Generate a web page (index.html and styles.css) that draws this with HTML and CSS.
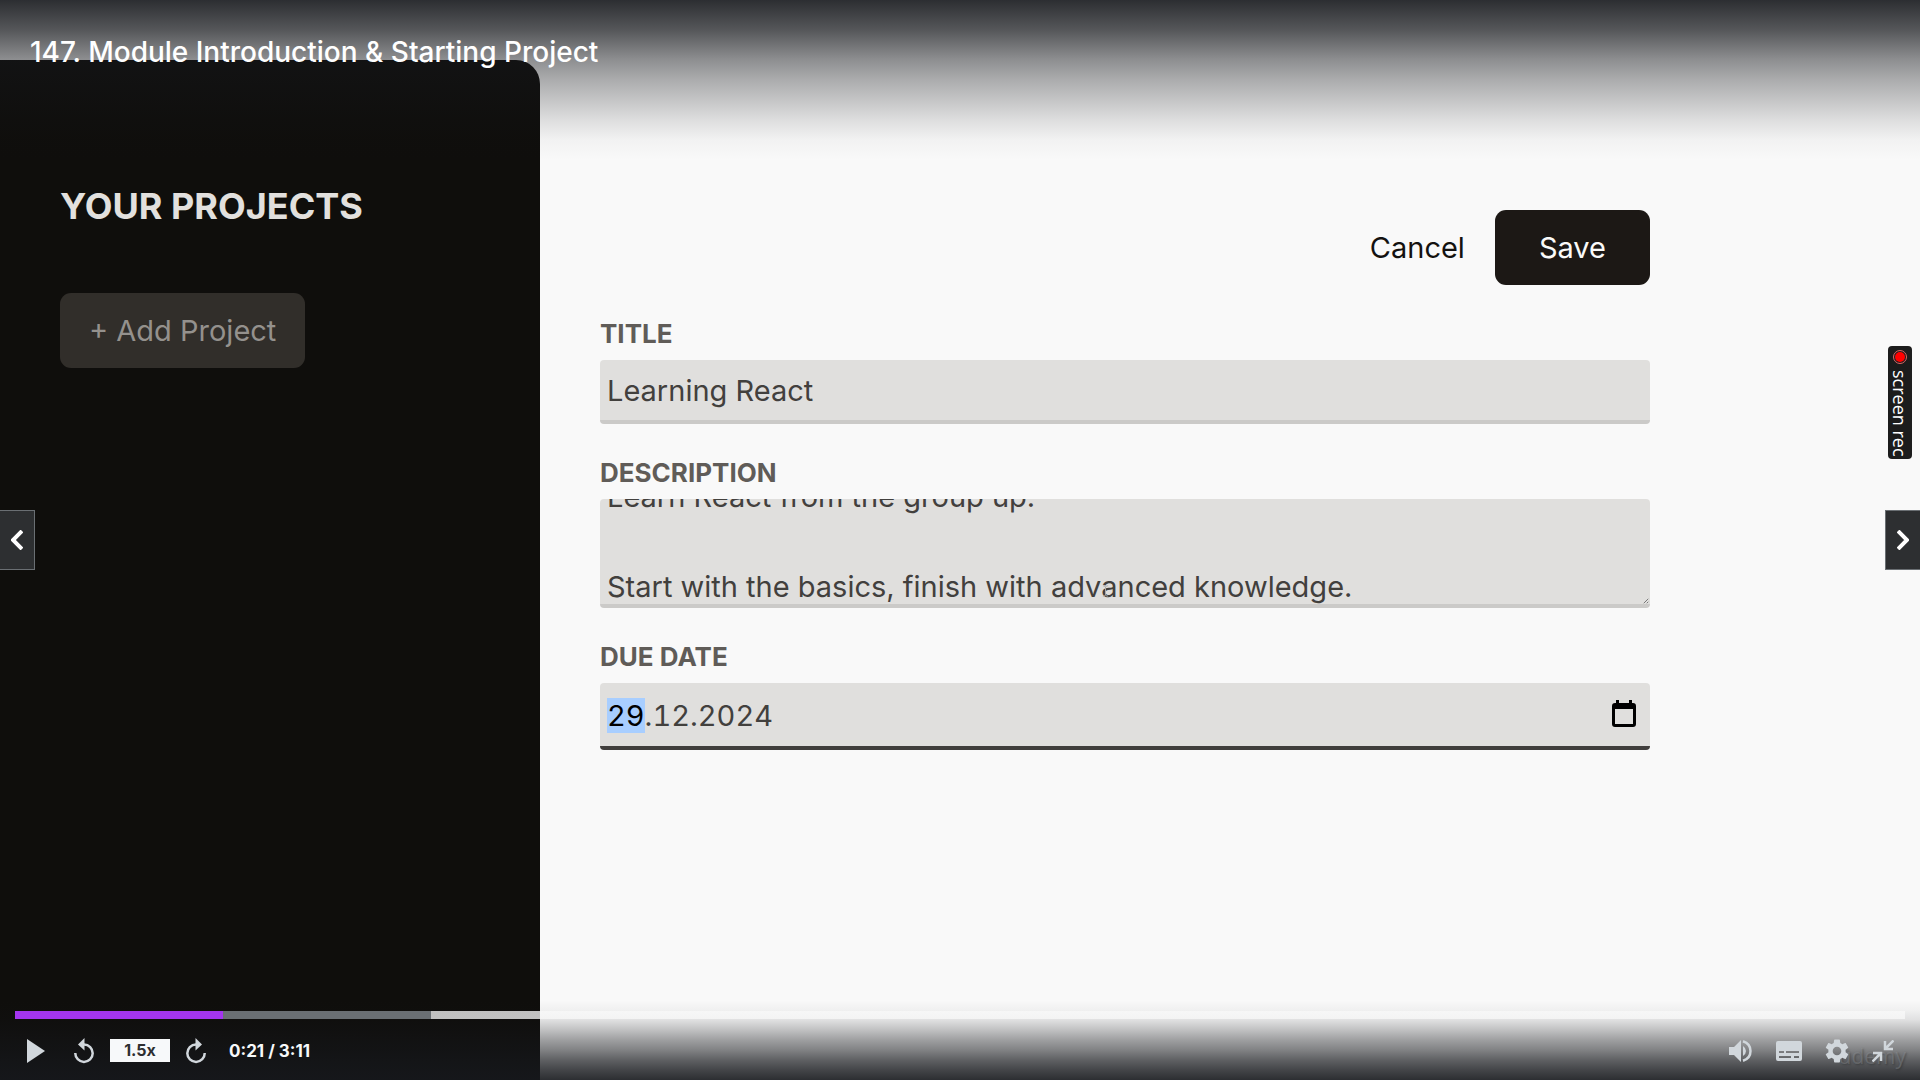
FILE: index.html
```html
<!DOCTYPE html>
<html lang="en">
<head>
<meta charset="utf-8">
<meta name="viewport" content="width=device-width, initial-scale=1">
<title>147. Module Introduction &amp; Starting Project</title>
<link rel="stylesheet" href="styles.css">
</head>
<body>
<div class="player">
  <div class="stage">
    <aside class="sidebar">
      <h2 class="sidebar-title">YOUR PROJECTS</h2>
      <button class="btn btn-add" type="button">+ Add Project</button>
    </aside>
    <main class="content">
      <form class="project-form">
        <div class="actions">
          <button class="btn btn-cancel" type="button">Cancel</button>
          <button class="btn btn-save" type="button">Save</button>
        </div>
        <div class="field">
          <label for="title">TITLE</label>
          <input class="control" id="title" type="text" value="Learning React">
        </div>
        <div class="field">
          <label for="description">DESCRIPTION</label>
          <div class="control-wrap">
            <textarea class="control" id="description" rows="2">Learn React from the group up.

Start with the basics, finish with advanced knowledge.</textarea>
            <svg class="grip" viewBox="0 0 8 8" aria-hidden="true"><path d="M1 7 7 1M5 7l2-2" /></svg>
            <svg class="pointer" viewBox="0 0 8 14" aria-hidden="true"><path d="M1 1q3 0 3 2v8q0 2-3 2M7 1Q4 1 4 3v8q0 2 3 2" /></svg>
          </div>
        </div>
        <div class="field">
          <label for="due">DUE DATE</label>
          <div class="control-wrap">
            <input class="control control-date" id="due" type="text" value="29.12.2024">
            <svg class="calendar" viewBox="0 0 24 27" aria-hidden="true"><path fill-rule="evenodd" d="M4 0h3v3h10V0h3v3h1q3 0 3 3v18q0 3-3 3H3q-3 0-3-3V6q0-3 3-3h1zM3 9v15h18V9z" /></svg>
          </div>
        </div>
      </form>
    </main>
  </div>

  <header class="topbar"><h1 class="lecture">147. Module Introduction &amp; Starting Project</h1></header>

  <button class="nav nav-prev" type="button" aria-label="Previous lecture"><svg viewBox="0 0 12 20"><path d="M11 1 2 10l9 9" /></svg></button>
  <button class="nav nav-next" type="button" aria-label="Next lecture"><svg viewBox="0 0 12 20"><path d="m1 1 9 9-9 9" /></svg></button>

  <div class="recorder">
    <svg viewBox="0 0 14 14" aria-hidden="true"><circle class="ring" cx="7" cy="7" r="6.5" /><circle class="dot" cx="7" cy="7" r="5" /></svg>
    <span>screen rec</span>
  </div>

  <footer class="bottombar">
    <span class="watermark">ûdemy</span>
    <input class="seek" type="range" min="0" max="191" value="21" aria-label="Seek" style="--played: 11%; --loaded: 22%">
    <div class="controls">
      <button class="icon-btn play" type="button" aria-label="Play"><svg width="18" height="24" viewBox="0 0 18 24"><path d="M0 0v24l18-12z" /></svg></button>
      <button class="icon-btn back" type="button" aria-label="Rewind 5 seconds"><svg width="20" height="26" viewBox="0 0 20 26"><path d="M10.500 0 4 6.500l6.500 6z" /><path class="line" d="M10 6.500A8.700 8.700 0 1 1 1.300 15" /></svg></button>
      <button class="rate" type="button">1.5x</button>
      <button class="icon-btn forward" type="button" aria-label="Forward 5 seconds"><svg width="20" height="26" viewBox="0 0 20 26"><path d="M9.500 0 16 6.500l-6.500 6z" /><path class="line" d="M10 6.500A8.700 8.700 0 1 0 18.700 15" /></svg></button>
      <span class="time">0:21 / 3:11</span>
      <span class="spacer"></span>
      <button class="icon-btn" type="button" aria-label="Mute"><svg width="24" height="24" viewBox="0 0 24 24"><path d="M0 8h5l7-7v22l-7-7H0zM14 7q3 2 3 5t-3 5z" /><path class="line" d="M14 2.200q7.500 2.400 7.500 9.800T14 21.800" /></svg></button>
      <button class="icon-btn" type="button" aria-label="Captions"><svg width="26" height="20" viewBox="0 0 26 20"><path fill-rule="evenodd" d="M2 0h22q2 0 2 2v16q0 2-2 2H2q-2 0-2-2V2q0-2 2-2zM3 10v2h5v-2zm7 0v2h13v-2zM3 15v2h12v-2zm15 0v2h5v-2z" /></svg></button>
      <button class="icon-btn" type="button" aria-label="Settings"><svg width="24" height="24" viewBox="2 2 20 20"><path d="M19.140 12.940c.04-.3.06-.61.06-.94 0-.32-.02-.64-.07-.94l2.030-1.580c.18-.14.23-.41.12-.61l-1.920-3.320c-.12-.22-.37-.29-.59-.22l-2.390.96c-.5-.38-1.030-.7-1.620-.94l-.36-2.540c-.04-.24-.24-.41-.48-.41h-3.840c-.24 0-.43.17-.47.41l-.36 2.540c-.59.24-1.130.57-1.620.94l-2.390-.96c-.22-.08-.47 0-.59.22L2.740 8.870c-.12.21-.08.47.12.61l2.030 1.580c-.05.3-.09.63-.09.94s.02.64.07.94l-2.030 1.580c-.18.14-.23.41-.12.61l1.920 3.320c.12.22.37.29.59.22l2.390-.96c.5.38 1.030.7 1.620.94l.36 2.540c.05.24.24.41.48.41h3.840c.24 0 .44-.17.47-.41l.36-2.540c.59-.24 1.130-.56 1.620-.94l2.390.96c.22.08.47 0 .59-.22l1.920-3.320c.12-.22.07-.47-.12-.61zM12 15.600A3.600 3.600 0 1 1 12 8.400a3.600 3.600 0 0 1 0 7.200z" /></svg></button>
      <button class="icon-btn" type="button" aria-label="Exit full screen"><svg width="22" height="22" viewBox="0 0 22 22"><path class="line" d="m21.500.500-8 8M13 1v8h8M.500 21.500l8-8M1 13h8v8" /></svg></button>
    </div>
  </footer>
</div>
<script src="script.js"></script>
</body>
</html>
```
FILE: styles.css
```css
* {
  box-sizing: border-box;
}

body {
  margin: 0;
  font-family: Inter, "Liberation Sans", sans-serif;
  background: #f9f9f9;
}

button {
  border: 0;
  padding: 0;
  background: none;
  font: inherit;
}

svg {
  display: block;
}

.player {
  position: relative;
  min-height: 100vh;
  display: flex;
  overflow: hidden;
}

.stage {
  flex: 1;
  display: flex;
  gap: 60px;
  padding-top: 60px;
}

/* Project manager */
.sidebar {
  width: 540px;
  padding: 120px 60px;
  background: #0f0e0c;
  border-radius: 0 24px 0 0;
}

.sidebar-title {
  margin: 0 0 60px;
  font-size: 36px;
  line-height: 53px;
  font-weight: 700;
  color: #e2e0de;
}

.btn {
  height: 75px;
  border-radius: 11px;
  font-size: 29px;
  line-height: 45px;
}

.btn-add {
  padding: 0 29px;
  background: #312e2a;
  color: #94918d;
}

.content {
  flex: 1;
  padding-top: 150px;
}

.project-form {
  max-width: 1050px;
}

.actions {
  display: flex;
  justify-content: flex-end;
  gap: 30px;
}

.btn-cancel {
  color: #141210;
}

.btn-save {
  padding: 0 44px;
  background: #1c1815;
  color: #fafaf9;
}

.field {
  display: flex;
  flex-direction: column;
  gap: 7px;
  margin-top: 30px;
}

.field label {
  font-size: 26px;
  line-height: 38px;
  font-weight: 700;
  color: #605c58;
}

.control {
  display: block;
  width: 100%;
  margin: 0;
  padding: 8px 7px 7px;
  border: 0;
  border-bottom: 4px solid #cbcac8;
  border-radius: 4px;
  background: #e0dfdd;
  color: #42403d;
  font: 400 29px/45px Inter, "Liberation Sans", sans-serif;
  outline: 0;
  resize: none;
  scrollbar-width: none;
}

.control-wrap {
  position: relative;
}

.control-date {
  height: 67px;
  border-bottom-color: #403e3c;
  font-variant-numeric: tabular-nums;
}

.control-date::selection {
  background: #a8ceff;
  color: #000;
}

.grip {
  position: absolute;
  right: 1px;
  bottom: 4px;
  width: 6px;
  height: 6px;
  fill: none;
  stroke: #555;
}

.pointer {
  position: absolute;
  left: 502px;
  top: 85px;
  width: 7px;
  height: 14px;
  fill: none;
  stroke: #aaa;
}

.calendar {
  position: absolute;
  right: 14px;
  top: 17px;
  width: 24px;
  height: 27px;
}

/* Player chrome */
.topbar {
  position: absolute;
  inset: 0 0 auto;
  height: 160px;
  padding: 32px 30px;
  background: linear-gradient(
    rgb(22 24 28 / .9),
    rgb(22 24 28 / .72) 30px,
    rgb(22 24 28 / .47) 60px,
    rgb(22 24 28 / .34) 80px,
    rgb(22 24 28 / .23) 100px,
    rgb(22 24 28 / .12) 120px,
    rgb(22 24 28 / .03) 140px,
    rgb(22 24 28 / 0)
  );
}

.lecture {
  margin: 0;
  font-size: 28px;
  line-height: 40px;
  font-weight: 500;
  color: #fff;
}

.nav {
  position: absolute;
  top: 510px;
  width: 35px;
  height: 60px;
  display: grid;
  place-items: center;
  background: #2d2f31;
  border: 1px solid #6a6f73;
}

.nav svg {
  width: 12px;
  height: 20px;
  fill: none;
  stroke: #fff;
  stroke-width: 4;
}

.nav-prev {
  left: 0;
  border-left: 0;
}

.nav-next {
  right: 0;
  border-right: 0;
}

.recorder {
  position: absolute;
  top: 346px;
  right: 8px;
  width: 24px;
  height: 113px;
  padding-top: 4px;
  display: flex;
  flex-direction: column;
  align-items: center;
  gap: 6px;
  border-radius: 4px;
  background: #1c1c1c;
  color: #fff;
}

.recorder svg {
  width: 14px;
  height: 14px;
}

.recorder .ring {
  fill: none;
  stroke: #d66;
}

.recorder .dot {
  fill: #f00;
}

.recorder span {
  writing-mode: vertical-rl;
  font: 500 18px/20px "Open Sans", sans-serif;
  white-space: nowrap;
}

.bottombar {
  position: absolute;
  inset: auto 0 0;
  padding: 11px 15px 0;
  height: 80px;
  background: linear-gradient(
    rgb(22 24 28 / 0),
    rgb(22 24 28 / .04) 10px,
    rgb(22 24 28 / .11) 20px,
    rgb(22 24 28 / .25) 30px,
    rgb(22 24 28 / .4) 40px,
    rgb(22 24 28 / .53) 50px,
    rgb(22 24 28 / .68) 60px,
    rgb(22 24 28 / .8) 70px,
    rgb(22 24 28 / .9)
  );
}

.seek {
  display: block;
  appearance: none;
  width: 100%;
  height: 8px;
  margin: 0;
  background: linear-gradient(90deg, #a435f0 var(--played), #6a6f73 var(--played) var(--loaded), rgb(249 249 249 / .76) var(--loaded));
}

.seek::-webkit-slider-thumb {
  appearance: none;
  width: 0;
  height: 0;
}

.controls {
  position: relative;
  display: flex;
  align-items: center;
  height: 63px;
  padding: 0 11px 0 12px;
  gap: 23px;
}

.icon-btn svg {
  fill: #d1d7dc;
}

.icon-btn .line {
  fill: none;
  stroke: #d1d7dc;
  stroke-width: 2.500;
}

.play {
  margin-right: 6px;
}

.back,
.rate {
  margin-right: -7px;
}

.rate {
  width: 60px;
  height: 23px;
  background: #f7f9fa;
  color: #2d2f31;
  font-size: 16px;
  line-height: 23px;
  font-weight: 700;
}

.time {
  font-size: 17px;
  line-height: 24px;
  font-weight: 700;
  color: #f7f9fa;
}

.spacer {
  flex: 1;
}

.watermark {
  position: absolute;
  right: 14px;
  bottom: 10px;
  font: 400 21px/28px "Open Sans", sans-serif;
  color: rgb(150 152 155 / .35);
  text-shadow: 1px 1px 2px rgb(30 32 36 / .4);
}
```
FILE: script.js
```js
const description = document.getElementById("description");
description.scrollTop = 33;

const due = document.getElementById("due");
due.focus();
due.setSelectionRange(0, 2);
```
